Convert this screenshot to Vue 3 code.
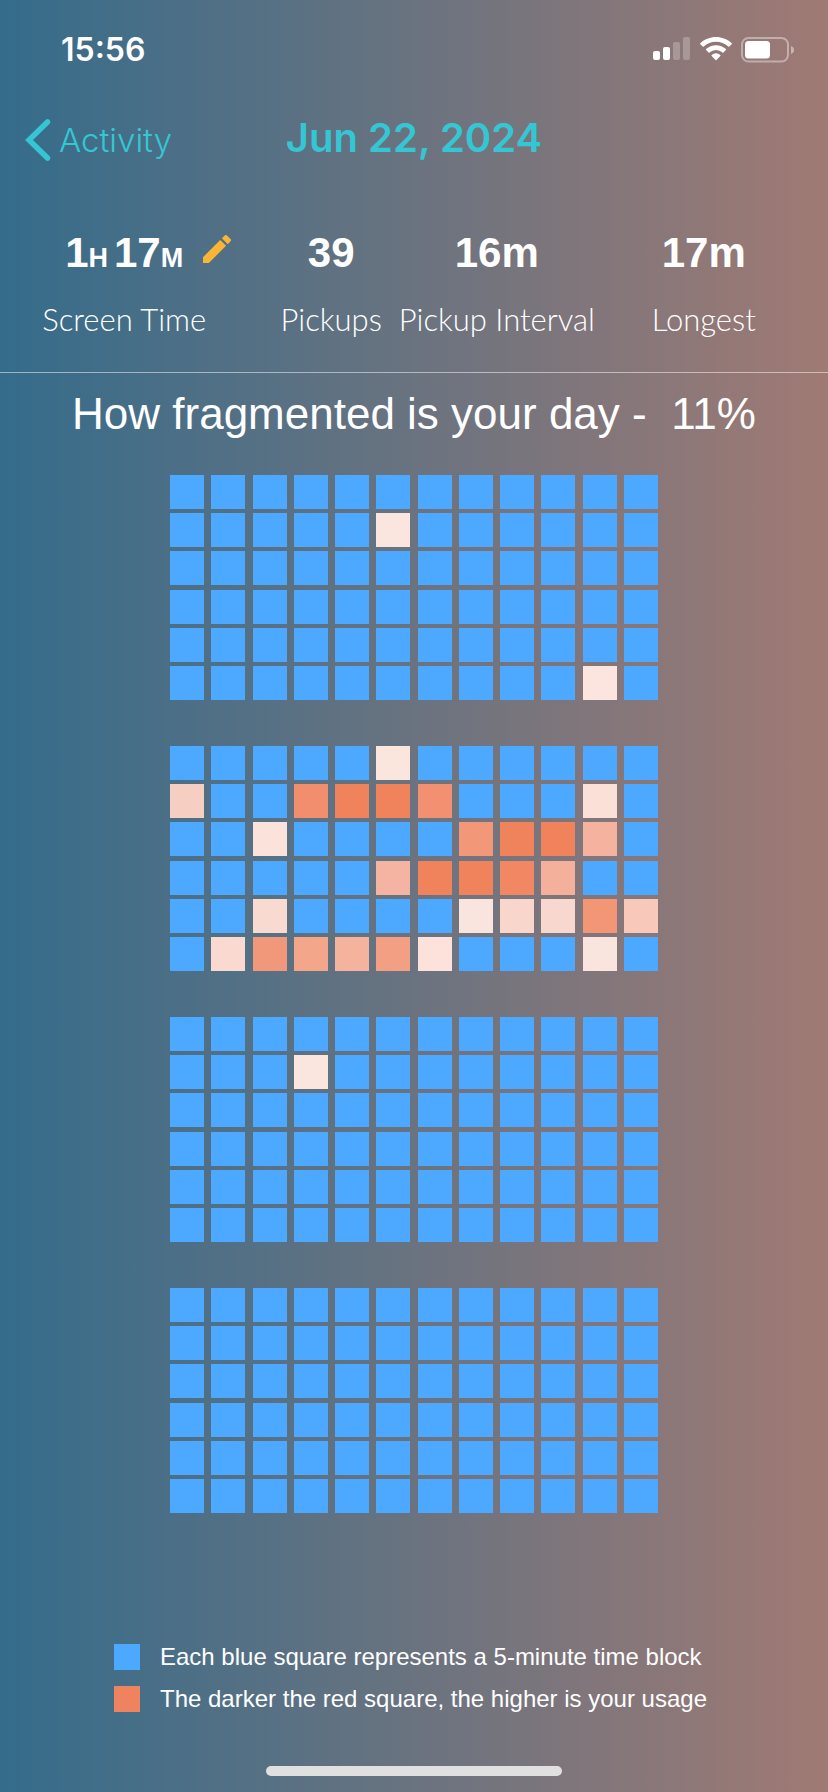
<script setup>
const quiet = '#4da9ff'
const ROWS = 6
const COLUMNS = 12

// Usage tint of each active five-minute block, keyed by "row-column" within a six-hour period
const periods = [
  { name: '00:00 – 06:00', usage: { '1-5': '#fbe5df', '5-10': '#fbe5de' } },
  {
    name: '06:00 – 12:00',
    usage: {
      '0-5': '#fbe6dd',
      '1-0': '#f7cfc2', '1-3': '#f28e6d', '1-4': '#f0835c', '1-5': '#f0835c', '1-6': '#f39071', '1-10': '#fbe0d7',
      '2-2': '#fbe3dc', '2-7': '#f39779', '2-8': '#f0835c', '2-9': '#f0835c', '2-10': '#f5b29e',
      '3-5': '#f5b4a1', '3-6': '#f0835c', '3-7': '#f0835c', '3-8': '#f18863', '3-9': '#f5b09b',
      '4-2': '#f9dad0', '4-7': '#fae4de', '4-8': '#f8d6cc', '4-9': '#f8d8ce', '4-10': '#f39676', '4-11': '#f8c9bb',
      '5-1': '#f9d9d0', '5-2': '#f2987a', '5-3': '#f4a68b', '5-4': '#f5b39d', '5-5': '#f39f83', '5-6': '#fce2db', '5-10': '#fae5de',
    },
  },
  { name: '12:00 – 18:00', usage: { '1-3': '#fbe6df' } },
  { name: '18:00 – 24:00', usage: {} },
]

function blocks(usage) {
  return Array.from({ length: ROWS * COLUMNS }, (_, i) =>
    usage[`${Math.floor(i / COLUMNS)}-${i % COLUMNS}`] ?? quiet)
}

const stats = [
  { label: 'Screen Time', hours: 1, minutes: 17 },
  { label: 'Pickups', value: '39' },
  { label: 'Pickup Interval', value: '16m' },
  { label: 'Longest', value: '17m' },
]
</script>

<template>
  <div class="screen">
    <div class="status">
      <span class="clock">15:56</span>
      <span class="indicators">
        <svg class="signal" viewBox="0 0 38 24" aria-hidden="true">
          <rect x="0" y="14" width="7" height="9" rx="2" fill="#fff" />
          <rect x="10" y="10" width="7" height="13" rx="2" fill="#fff" />
          <rect x="20" y="5" width="7" height="18" rx="2" fill="#fff" opacity=".24" />
          <rect x="30" y="0" width="7" height="23" rx="2" fill="#fff" opacity=".24" />
        </svg>
        <svg class="wifi" viewBox="0 0 32 24" aria-hidden="true">
          <path fill="#fff" d="M16 0C22 0 27.500 2.300 31.700 6.200Q32.200 6.700 31.700 7.200L29.300 9.600Q28.800 10 28.300 9.600C24.900 6.500 20.700 4.800 16 4.800S7.100 6.500 3.700 9.600Q3.200 10 2.700 9.600L.3 7.200Q-.2 6.700.3 6.200C4.500 2.300 10 0 16 0Z" />
          <path fill="#fff" d="M16 8.300C19.800 8.300 23.200 9.700 25.900 12.100Q26.400 12.600 25.900 13.100L23.500 15.500Q23 16 22.500 15.500A9.700 9.700 0 0 0 9.500 15.500Q9 16 8.500 15.500L6.100 13.100Q5.600 12.600 6.100 12.100C8.800 9.700 12.200 8.300 16 8.300Z" />
          <path fill="#fff" d="M16 16.300Q18.500 16.300 20.300 17.900Q20.800 18.400 20.300 18.900L16.500 22.900Q16 23.400 15.500 22.900L11.700 18.900Q11.200 18.400 11.700 17.900Q13.500 16.300 16 16.300Z" />
        </svg>
        <svg class="battery" viewBox="0 0 54 26" aria-hidden="true">
          <rect x="1" y="1" width="46" height="23.500" rx="6.500" fill="none" stroke="#fff" stroke-opacity=".4" stroke-width="2" />
          <rect x="4" y="4" width="25" height="17.500" rx="3.500" fill="#fff" />
          <path d="M50 9Q53 10.200 53 13T50 17Z" fill="#fff" opacity=".45" />
        </svg>
      </span>
    </div>

    <header class="nav">
      <button class="back" type="button">
        <svg viewBox="0 0 26 42" aria-hidden="true">
          <path d="M22.500 3L4 21L22.500 39" fill="none" stroke="currentColor" stroke-width="5.500" stroke-linecap="round" stroke-linejoin="miter" />
        </svg>
        <span>Activity</span>
      </button>
      <h1>Jun 22, 2024</h1>
    </header>

    <dl class="stats">
      <div v-for="stat in stats" :key="stat.label" class="stat">
        <dt>{{ stat.label }}</dt>
        <dd v-if="stat.hours">
          {{ stat.hours }}<small class="hour">H</small>{{ stat.minutes }}<small>M</small>
          <button class="edit" type="button" aria-label="Edit screen time">
            <svg viewBox="3 3 18 18" aria-hidden="true">
              <path fill="#fbb536" d="M3 17.250V21h3.750L17.810 9.940l-3.750-3.750L3 17.250zM20.710 7.040a1 1 0 0 0 0-1.410l-2.340-2.340a1 1 0 0 0-1.410 0l-1.830 1.830 3.750 3.750 1.830-1.830z" />
            </svg>
          </button>
        </dd>
        <dd v-else>{{ stat.value }}</dd>
      </div>
    </dl>

    <main>
      <h2>How fragmented is your day -&nbsp; 11%</h2>
      <div class="periods">
        <div v-for="period in periods" :key="period.name" class="period" role="img" :aria-label="period.name">
          <span v-for="(color, i) in blocks(period.usage)" :key="i" class="block" :style="{ background: color }"></span>
        </div>
      </div>
    </main>

    <footer>
      <ul class="legend">
        <li><span class="swatch calm"></span>Each blue square represents a 5-minute time block</li>
        <li><span class="swatch busy"></span>The darker the red square, the higher is your usage</li>
      </ul>
      <div class="home"></div>
    </footer>
  </div>
</template>

<style>
body {
  margin: 0;
}
</style>

<style scoped>
.screen {
  box-sizing: border-box;
  display: flex;
  flex-direction: column;
  min-height: 100vh;
  overflow: hidden;
  color: #fff;
  font-family: "Liberation Sans", Arial, sans-serif;
  background: linear-gradient(90deg, #346c8b, #a07a74);
}

.status {
  display: flex;
  justify-content: space-between;
  align-items: center;
  height: 100px;
  padding: 0 33px 0 61px;
}

.clock {
  font: 600 32px/40px Inter, sans-serif;
}

.indicators {
  display: flex;
  gap: 9px;
}

.signal {
  width: 38px;
  height: 24px;
}

.wifi {
  width: 32px;
  height: 24px;
}

.battery {
  width: 54px;
  height: 26px;
}

.nav {
  display: grid;
  grid-template-columns: 1fr auto 1fr;
  align-items: center;
  height: 80px;
  padding: 0 25px;
  color: #35c6d3;
  font-family: Inter, sans-serif;
}

.back {
  display: flex;
  align-items: center;
  gap: 8px;
  justify-self: start;
  padding: 0;
  border: 0;
  background: none;
  color: inherit;
  font: 300 33px/40px Inter, sans-serif;
  cursor: pointer;
}

.back svg {
  width: 26px;
  height: 42px;
}

h1 {
  margin: 0 0 4px;
  font-size: 40px;
  line-height: 48px;
  font-weight: 600;
}

.stats {
  display: grid;
  grid-template-columns: 3fr 2fr 2fr 3fr;
  margin: 0;
  padding: 49px 0 35px;
  border-bottom: 1px solid rgba(255, 255, 255, .5);
}

.stat {
  display: flex;
  flex-direction: column-reverse;
  align-items: center;
  gap: 24px;
  min-width: 0;
  white-space: nowrap;
}

dt {
  font: 300 31px/36px Lato, sans-serif;
}

dd {
  position: relative;
  margin: 0;
  font-size: 42px;
  line-height: 48px;
  font-weight: 700;
}

small {
  font-size: 27px;
  line-height: 1;
}

.hour {
  margin-right: 6px;
}

.edit {
  position: absolute;
  left: calc(100% + 20px);
  top: 6px;
  padding: 0;
  border: 0;
  background: none;
  cursor: pointer;
}

.edit svg {
  display: block;
  width: 28px;
  height: 28px;
}

h2 {
  margin: 17px 0 37px;
  text-align: center;
  font-size: 44px;
  line-height: 48px;
  font-weight: 400;
}

.periods {
  display: grid;
  justify-content: center;
  gap: 46px;
}

.period {
  display: grid;
  grid-template-columns: repeat(12, 34px);
  grid-auto-rows: 34px;
  justify-content: space-between;
  align-content: space-between;
  width: 488px;
  min-height: 225px;
}

footer {
  margin-top: auto;
  padding-bottom: 16px;
}

.legend {
  display: grid;
  gap: 16px;
  margin: 0 0 54px;
  padding: 0 0 0 114px;
  list-style: none;
}

.legend li {
  display: flex;
  align-items: center;
  gap: 20px;
  font-size: 24px;
  line-height: 26px;
}

.swatch {
  width: 26px;
  height: 26px;
}

.calm {
  background: #4da9ff;
}

.busy {
  background: #f0835f;
}

.home {
  width: 296px;
  height: 10px;
  margin: 0 auto;
  border-radius: 5px;
  background: #e0e0e1;
}
</style>
